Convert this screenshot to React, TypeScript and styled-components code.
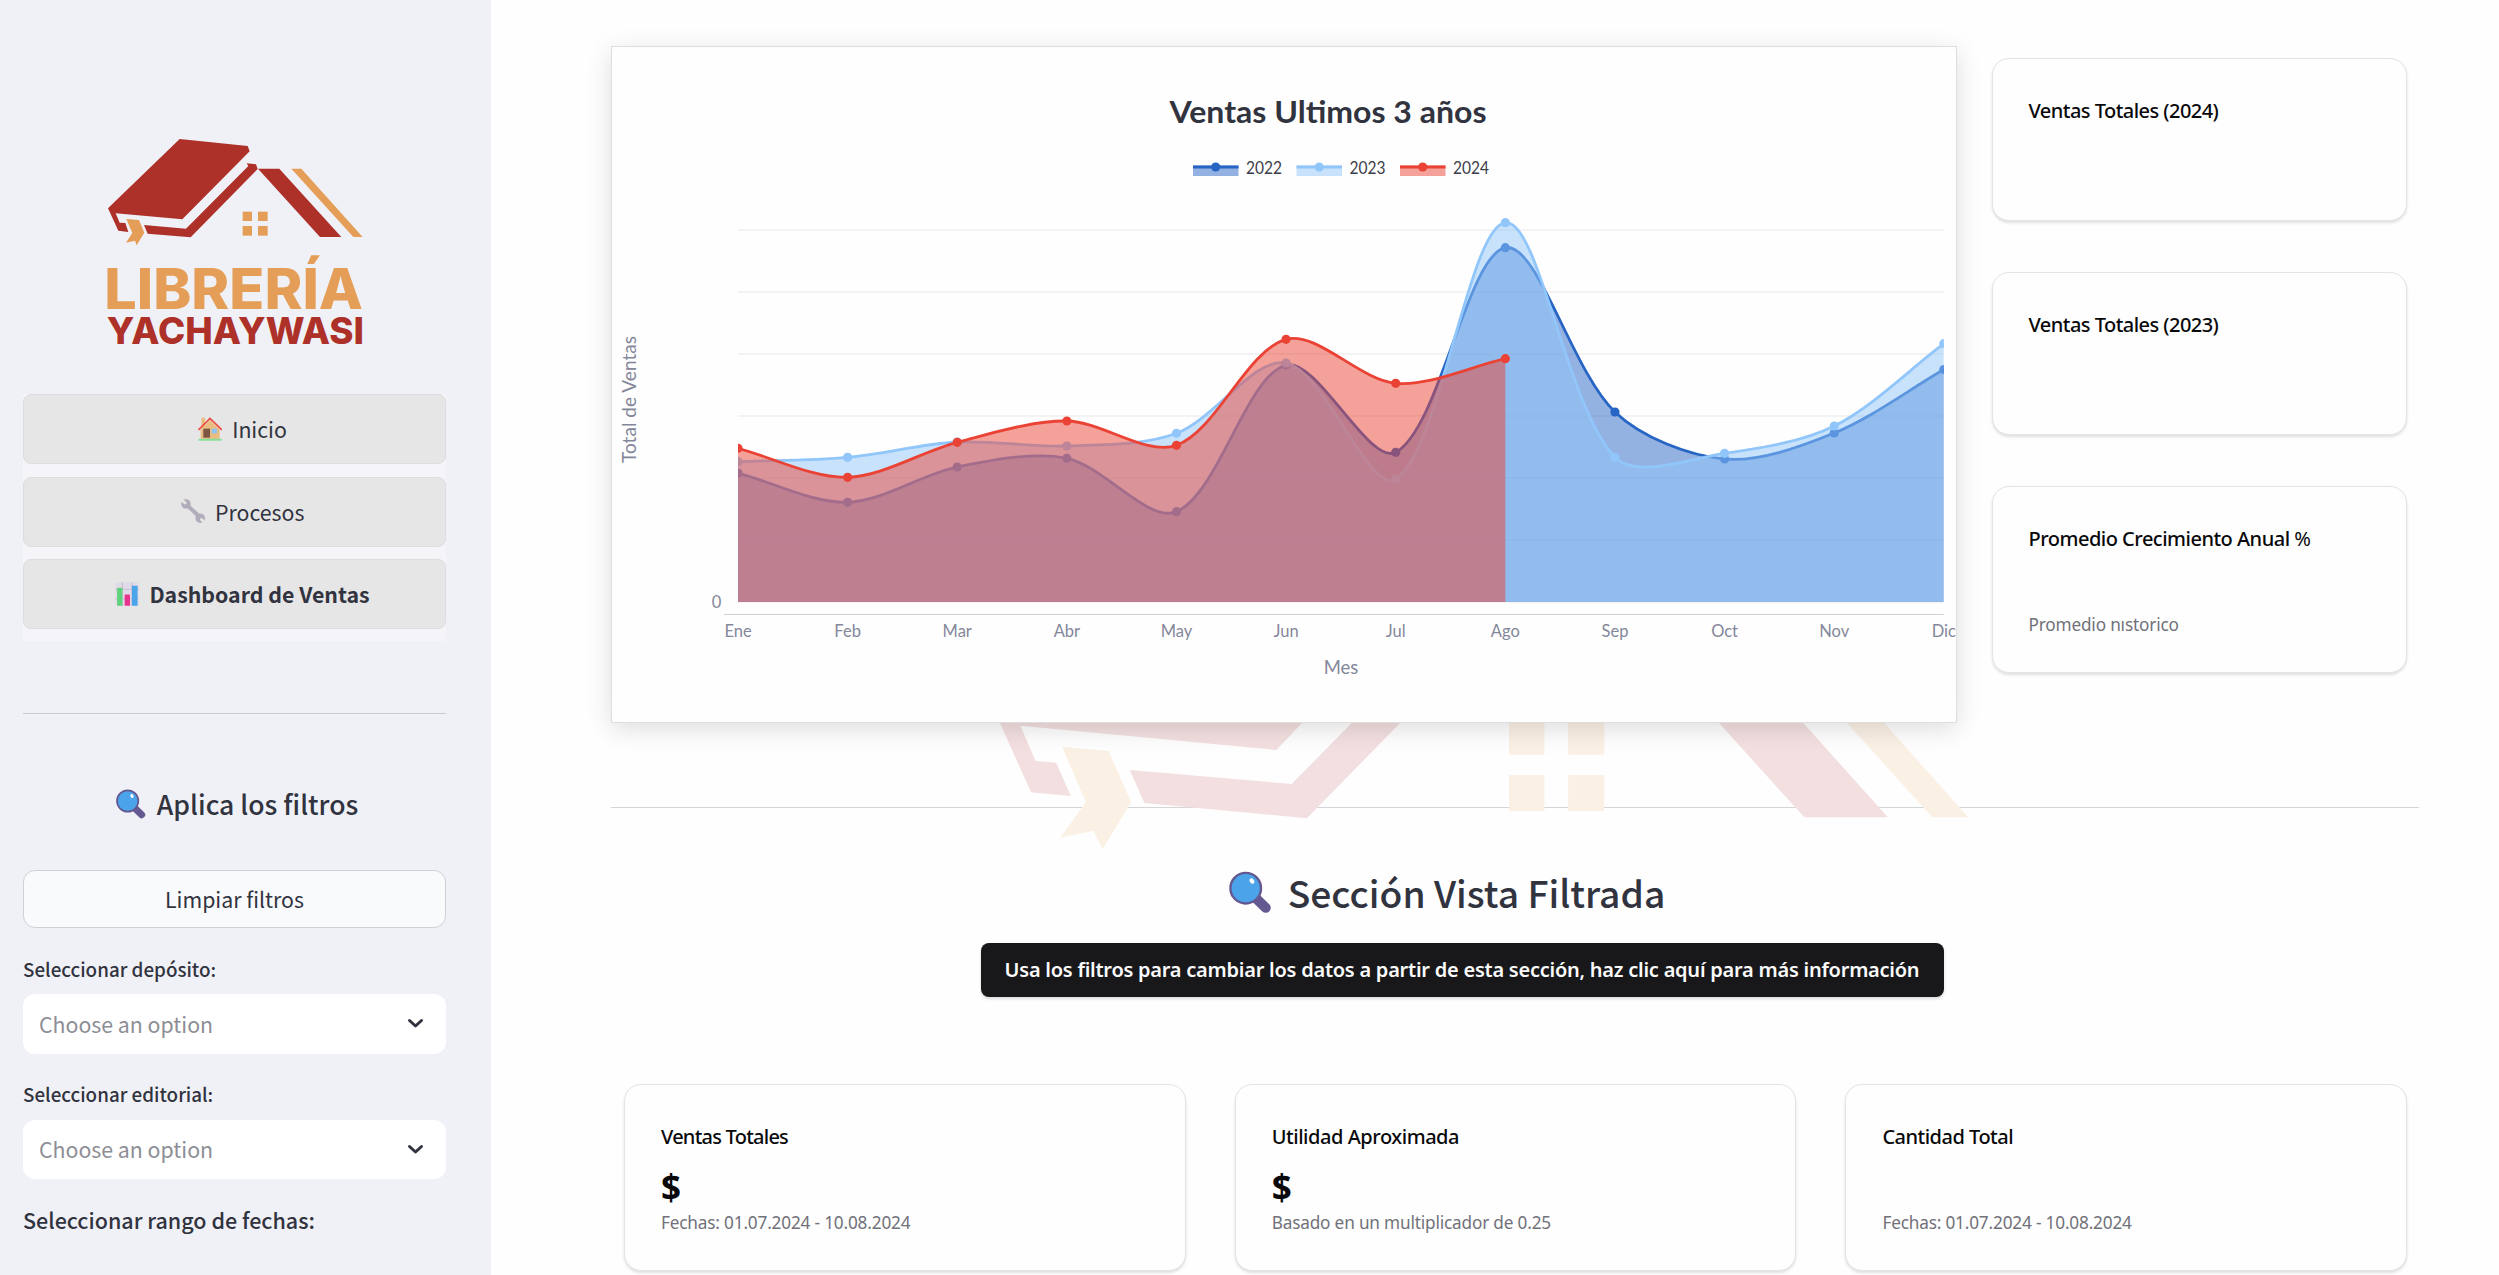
import React from "react";
import styled, { createGlobalStyle } from "styled-components";

const SOURCE = '"Noto Sans CJK SC", "Noto Sans", sans-serif';
const SEGOE = '"Noto Sans", "Open Sans", sans-serif';
const INK = "#31333f";

const GlobalStyle = createGlobalStyle`
  * { box-sizing: border-box; }
  body { margin: 0; background: #fefefe; color: ${INK}; font-family: ${SOURCE}; }
  svg { display: block; flex: none; }
`;

/* ---------- page shell ---------- */

const Page = styled.div`
  display: flex;
  width: 2499px;
  height: 1275px;
  overflow: hidden;
`;

const Sidebar = styled.aside`
  width: 491px;
  flex: none;
  padding: 139px 45px 0 23px;
  background: #f0f1f6;
  display: flex;
  flex-direction: column;

  > * {
    flex: none;
  }
`;

const Main = styled.main`
  position: relative;
  flex: 1;
  padding: 46px 80px 0 120px;
`;

const Watermark = styled.svg`
  position: absolute;
  left: 489px;
  top: 700px;
`;

const Rule = styled.hr<{ $top: number }>`
  width: 100%;
  height: 1px;
  margin: ${(p) => p.$top}px 0 0;
  border: 0;
  background: rgba(49, 51, 63, 0.2);
`;

/* ---------- sidebar ---------- */

const LogoBox = styled.div`
  display: flex;
  padding-left: 84px;
  margin-bottom: 49px;

  svg {
    overflow: visible;
  }
`;

const Nav = styled.nav`
  display: flex;
  flex-direction: column;
  gap: 12.5px;
  padding-bottom: 12px;
  background: #f4f4f9;
`;

const NavItem = styled.a<{ $active?: boolean }>`
  height: 70px;
  display: flex;
  align-items: center;
  justify-content: center;
  gap: 10px;
  padding-left: 16px;
  border: 1px solid #dcdddd;
  border-radius: 8px;
  background: #e6e6e6;
  font-size: 21.3px;
  font-weight: ${(p) => (p.$active ? 700 : 400)};
  line-height: 30px;
`;

const FilterTitle = styled.h3`
  display: flex;
  align-items: center;
  justify-content: center;
  gap: 11px;
  margin: 70px 0 46px;
  padding-left: 5px;
  font-size: 26.6px;
  font-weight: 500;
  line-height: 40px;
`;

const ClearButton = styled.button`
  height: 58px;
  border: 1px solid #cfd0d5;
  border-radius: 12px;
  background: #f9fafc;
  color: ${INK};
  font: 400 21.3px/30px ${SOURCE};
`;

const FieldLabel = styled.label<{ $large?: boolean }>`
  margin-top: ${(p) => (p.$large ? 26.2 : 26.8)}px;
  font-size: ${(p) => (p.$large ? 21.5 : 18.8)}px;
  font-weight: 500;
  line-height: ${(p) => (p.$large ? 30 : 28)}px;
`;

const Select = styled.div`
  height: 59.5px;
  margin-top: 11.3px;
  padding: 0 22px 0 16px;
  display: flex;
  align-items: center;
  justify-content: space-between;
  border-radius: 12px;
  background: #fff;
  color: #8d8e95;
  font-size: 21.3px;
  line-height: 30px;
`;

/* ---------- top area ---------- */

const TopRow = styled.section`
  display: flex;
  align-items: flex-start;
  gap: 34.5px;
`;

const ChartCard = styled.div`
  position: relative;
  width: 1346px;
  height: 676.5px;
  border: 1px solid #dedede;
  background: #fefefe;
  box-shadow: 0 6px 24px rgba(0, 0, 0, 0.13);
  overflow: hidden;
`;

const YearColumn = styled.div`
  display: flex;
  flex-direction: column;
  gap: 51px;
  width: 415.5px;
  padding-top: 12.3px;
`;

const Card = styled.article`
  border: 1px solid #e4e4e7;
  border-radius: 17px;
  background: #fefefe;
  padding: 38px 36px 36.5px;
  box-shadow: 0 2px 3px rgba(0, 0, 0, 0.12);
  font-family: ${SEGOE};
  white-space: nowrap;
`;

const CardTitle = styled.h4<{ $track: number }>`
  margin: 0;
  color: #09090b;
  font-size: 20px;
  font-weight: 500;
  line-height: 28px;
  letter-spacing: ${(p) => p.$track}px;
`;

const Thin = styled.span`
  font-weight: 400;
`;

const CardValue = styled.div`
  height: 44px;
  margin-top: 14.5px;
  color: #09090b;
  font-size: 35px;
  font-weight: 700;
  line-height: 44px;
`;

const CardNote = styled.p`
  margin: 1.5px 0 -1.5px;
  height: 24px;
  color: #71717a;
  font-size: 17.2px;
  line-height: 24px;
  letter-spacing: -0.17px;
`;

/* The blank patch above the note trims the tops of these letters. */
const Trimmed = styled.span`
  position: relative;

  &::before {
    content: "";
    position: absolute;
    left: 0;
    right: -1px;
    top: 0;
    height: 7.5px;
    background: #fefefe;
  }
`;

/* ---------- filtered section ---------- */

const FilteredHead = styled.section`
  width: 1702px;
  display: flex;
  flex-direction: column;
  align-items: center;
`;

const SectionTitle = styled.h2`
  display: flex;
  align-items: center;
  gap: 16px;
  margin: 59px 30px 26px 0;
  font-size: 37.2px;
  font-weight: 500;
  line-height: 50px;
`;

const InfoButton = styled.button`
  width: 963px;
  height: 54px;
  padding: 0;
  border: 0;
  border-radius: 8px;
  background: #18181b;
  color: #fafafa;
  box-shadow: 0 2px 3px rgba(0, 0, 0, 0.14);
  font: 600 20px/28px ${SEGOE};
  letter-spacing: -0.24px;
  white-space: nowrap;
`;

const CardRow = styled.section`
  display: grid;
  grid-template-columns: repeat(3, 561.7px);
  column-gap: 49px;
  padding-left: 13px;
  margin-top: 86.6px;
`;

/* ---------- drawings ---------- */

const RED = "#ad3029";
const ORANGE = "#e59e58";

const Logo = () => (
  <svg width="256" height="206" viewBox="321 117 768 618">
    <g fill={RED}>
      <polygon points="539,117 743,138 749,154 547,358 347,340 359,368 376,369 385,396 355,392 324,325" />
      <polygon points="740,190 768,193 773,207 572,412 443,401 432,375 558,386 745,198" />
      <polygon points="774,206 838,206 1024,411 960,411" />
    </g>
    <g fill={ORANGE}>
      <polygon points="874,206 904,206 1088,411 1060,411" />
      <polygon points="379,357 417,360 433,398 410,436 405,422 378,428 397,399" />
      <rect x="728" y="335" width="28" height="28" />
      <rect x="774" y="335" width="29" height="28" />
      <rect x="728" y="378" width="28" height="29" />
      <rect x="774" y="378" width="29" height="29" />
    </g>
    <text x="313" y="628" fill={ORANGE} fontFamily="Inter, sans-serif" fontWeight="800" fontSize="168" textLength="776" lengthAdjust="spacingAndGlyphs">
      LIBRERÍA
    </text>
    <text x="320" y="732" fill={RED} fontFamily="Inter, sans-serif" fontWeight="800" fontSize="111" textLength="772" lengthAdjust="spacingAndGlyphs">
      YACHAYWASI
    </text>
  </svg>
);

const HouseIcon = () => (
  <svg width="24" height="24" viewBox="595 112 72 72">
    <rect x="605" y="114" width="11" height="30" fill="#e9bd82" />
    <polygon points="603,150 631,121 660,150 660,178 603,178" fill="#e9bd82" />
    <rect x="596" y="177" width="71" height="6" rx="3" fill="#86e29b" />
    <rect x="611" y="147" width="20" height="27" fill="#7d5643" />
    <rect x="636" y="147" width="16" height="14" fill="#90c4f4" />
    <polyline points="598,149 631,116 665,149" fill="none" stroke="#ec4b40" strokeWidth="5" strokeLinecap="round" />
  </svg>
);

const WrenchIcon = () => (
  <svg width="24.5" height="24.5" viewBox="542 361 74 74">
    <g fill="#b3adbb" stroke="#b3adbb">
      <line x1="562" y1="381" x2="597" y2="414" strokeWidth="12" />
      <circle cx="557" cy="376" r="14.5" stroke="none" />
      <circle cx="600" cy="419" r="14.5" stroke="none" />
    </g>
    <g stroke="#e6e6e6" strokeWidth="9" strokeLinecap="round">
      <line x1="541" y1="362" x2="554" y2="373" />
      <line x1="604" y1="423" x2="617" y2="436" />
    </g>
  </svg>
);

const BarsIcon = () => (
  <svg width="24" height="24.5" viewBox="345 607 72 74">
    <rect x="346" y="608" width="70" height="72" rx="8" fill="#e1dbe9" />
    <path d="M367 608V680M396 608V680M346 629H416M346 658H416" stroke="#c4bbcd" strokeWidth="3" />
    <rect x="351" y="624" width="16" height="55" rx="2" fill="#5fd37c" />
    <rect x="374" y="645" width="16" height="34" rx="2" fill="#e8338d" />
    <rect x="396" y="618" width="17" height="61" rx="2" fill="#4aa4ea" />
  </svg>
);

const LensIcon = ({ size }: { size: number }) => (
  <svg width={size} height={size} viewBox="347 145 90 90">
    <line x1="403" y1="202" x2="424" y2="222" stroke="#63588f" strokeWidth="21" strokeLinecap="round" />
    <circle cx="382" cy="181" r="32" fill="#4ba3ea" stroke="#63588f" strokeWidth="5" />
    <ellipse cx="395" cy="166" rx="4.5" ry="6" fill="#fff" transform="rotate(-30 395 166)" />
  </svg>
);

const Chevron = () => (
  <svg width="17" height="11" viewBox="0 0 17 11" fill="none" stroke={INK} strokeWidth="3" strokeLinecap="round" strokeLinejoin="round">
    <path d="M2.500 2.500 8.500 8 14.500 2.500" />
  </svg>
);

const HouseWatermark = () => (
  <Watermark width="1000" height="170" viewBox="980 700 1000 170">
    <g fill="#f3dfe0">
      <polygon points="989.600,700 1323.800,700 1276.400,750 1020.400,725.700 1035.600,761 1056.200,762.700 1070.800,796 1031,792.300" />
      <polygon points="1129.800,770 1291.600,784 1374.400,700 1422.600,700 1306.900,818.300 1144.400,803" />
      <polygon points="1698.300,700 1782.600,700 1887.900,817.300 1804.300,817.300" />
    </g>
    <g fill="#fbf0e4">
      <polygon points="1826.300,700 1863.700,700 1968.200,817.300 1932.300,817.300" />
      <polygon points="1062.100,747 1108.600,751 1131.100,802.300 1102.600,849 1093.300,830.700 1060.200,837.700 1086,802.300" />
      <rect x="1509" y="700" width="35.500" height="54.700" />
      <rect x="1568.200" y="700" width="36" height="54.700" />
      <rect x="1509" y="775" width="35.500" height="36" />
      <rect x="1568.200" y="775" width="36" height="36" />
    </g>
  </Watermark>
);

/* ---------- chart ---------- */

type Pt = { x: number; y: number };

const MONTHS = ["Ene", "Feb", "Mar", "Abr", "May", "Jun", "Jul", "Ago", "Sep", "Oct", "Nov", "Dic"];
const LEFT = 738;
const STEP = 109.62;
const RIGHT = LEFT + STEP * 11;
const BASE = 602;
const TENSION = 0.32;

const SERIES = [
  { name: "2022", color: "#2765c4", legendX: 1193, values: [473, 502.3, 467, 458.3, 511.7, 365, 452.3, 247.7, 412, 459, 433, 369.5] },
  { name: "2023", color: "#91c6fa", legendX: 1296.5, values: [461.7, 457.3, 442, 446, 433.3, 363, 479, 222.7, 457.3, 453.3, 426, 343.7] },
  { name: "2024", color: "#ea4335", legendX: 1400, values: [448.3, 477.3, 442.3, 421, 445.3, 339.3, 383.3, 358.7] },
];

function smooth(pts: Pt[]) {
  const dist = (a: Pt, b: Pt) => Math.hypot(a.x - b.x, a.y - b.y);
  const ctrl = pts.map((p, i) => {
    const a = pts[Math.max(i - 1, 0)];
    const b = pts[Math.min(i + 1, pts.length - 1)];
    const d0 = dist(a, p);
    const d1 = dist(p, b);
    const f0 = (TENSION * d0) / (d0 + d1);
    const f1 = (TENSION * d1) / (d0 + d1);
    return {
      in: { x: p.x - f0 * (b.x - a.x), y: p.y - f0 * (b.y - a.y) },
      out: { x: p.x + f1 * (b.x - a.x), y: p.y + f1 * (b.y - a.y) },
    };
  });
  return pts.reduce((d, p, i) => {
    if (i === 0) return `M${p.x} ${p.y}`;
    const c1 = ctrl[i - 1].out;
    const c2 = ctrl[i].in;
    return `${d} C${c1.x} ${c1.y} ${c2.x} ${c2.y} ${p.x} ${p.y}`;
  }, "");
}

const SalesChart = () => (
  <svg width="1344" height="674.5" viewBox="612 47 1344 674.500" fontFamily="Lato, sans-serif">
    <defs>
      <clipPath id="plot">
        <rect x={LEFT} y="180" width={RIGHT - LEFT} height={BASE - 180} />
      </clipPath>
    </defs>
    <text x="1169.500" y="122.700" fill={INK} fontSize="29.500" fontWeight="700" textLength="317" lengthAdjust="spacingAndGlyphs">
      Ventas Ultimos 3 años
    </text>
    {SERIES.map((s) => (
      <g key={s.name}>
        <rect x={s.legendX} y="165.500" width="45.500" height="10.500" fill={s.color} fillOpacity="0.5" />
        <line x1={s.legendX} x2={s.legendX + 45.5} y1="167" y2="167" stroke={s.color} strokeWidth="2.800" />
        <circle cx={s.legendX + 22.7} cy="167" r="4.600" fill={s.color} />
        <text x={s.legendX + 53} y="174" fill="#3b3d48" fontSize="16.500" textLength="36" lengthAdjust="spacingAndGlyphs">
          {s.name}
        </text>
      </g>
    ))}
    {[230, 292, 354, 416, 478, 540, 602].map((y) => (
      <line key={y} x1={LEFT} x2={RIGHT} y1={y} y2={y} stroke="#f3f3f3" strokeWidth="2" />
    ))}
    <g clipPath="url(#plot)">
      {SERIES.map((s) => {
        const pts = s.values.map((y, i) => ({ x: LEFT + i * STEP, y }));
        const d = smooth(pts);
        return (
          <g key={s.name}>
            <path d={`${d} V${BASE} H${LEFT} Z`} fill={s.color} fillOpacity="0.5" />
            <path d={d} fill="none" stroke={s.color} strokeWidth="2.800" />
            {pts.map((p) => (
              <circle key={p.x} cx={p.x} cy={p.y} r="4.600" fill={s.color} />
            ))}
          </g>
        );
      })}
    </g>
    <line x1="724" x2={RIGHT} y1="614.500" y2="614.500" stroke="#d0d1d3" strokeWidth="1" />
    <g fill="#84879a" fontSize="16.500" textAnchor="middle">
      <text x="716.500" y="608">0</text>
      {MONTHS.map((m, i) => (
        <text key={m} x={LEFT + i * STEP} y="637">
          {m}
        </text>
      ))}
      <text x="1341" y="673.700" fontSize="18.500">
        Mes
      </text>
      <text transform="translate(636 399.500) rotate(-90)" fontSize="19" textLength="127">
        Total de Ventas
      </text>
    </g>
  </svg>
);

/* ---------- app ---------- */

export default function App() {
  return (
    <Page>
      <GlobalStyle />
      <Sidebar>
        <LogoBox>
          <Logo />
        </LogoBox>
        <Nav>
          <NavItem>
            <HouseIcon />
            Inicio
          </NavItem>
          <NavItem>
            <WrenchIcon />
            Procesos
          </NavItem>
          <NavItem $active>
            <BarsIcon />
            Dashboard de Ventas
          </NavItem>
        </Nav>
        <Rule $top={72} />
        <FilterTitle>
          <LensIcon size={30} />
          Aplica los filtros
        </FilterTitle>
        <ClearButton>Limpiar filtros</ClearButton>
        <FieldLabel>Seleccionar depósito:</FieldLabel>
        <Select>
          Choose an option
          <Chevron />
        </Select>
        <FieldLabel>Seleccionar editorial:</FieldLabel>
        <Select>
          Choose an option
          <Chevron />
        </Select>
        <FieldLabel $large>Seleccionar rango de fechas:</FieldLabel>
      </Sidebar>

      <Main>
        <HouseWatermark />
        <TopRow>
          <ChartCard>
            <SalesChart />
          </ChartCard>
          <YearColumn>
            <Card>
              <CardTitle $track={-0.54}>Ventas Totales (2024)</CardTitle>
              <CardValue />
            </Card>
            <Card>
              <CardTitle $track={-0.54}>Ventas Totales (2023)</CardTitle>
              <CardValue />
            </Card>
            <Card>
              <CardTitle $track={-0.5}>
                Promedio Crecimiento Anual <Thin>%</Thin>
              </CardTitle>
              <CardValue />
              <CardNote>
                Promedio <Trimmed>hi</Trimmed>storico
              </CardNote>
            </Card>
          </YearColumn>
        </TopRow>

        <Rule $top={84.5} />

        <FilteredHead>
          <SectionTitle>
            <LensIcon size={43} />
            Sección Vista Filtrada
          </SectionTitle>
          <InfoButton>
            Usa los filtros para cambiar los datos a partir de esta sección, haz clic aquí para más información
          </InfoButton>
        </FilteredHead>

        <CardRow>
          <Card>
            <CardTitle $track={-0.76}>Ventas Totales</CardTitle>
            <CardValue>$</CardValue>
            <CardNote>Fechas: 01.07.2024 - 10.08.2024</CardNote>
          </Card>
          <Card>
            <CardTitle $track={-0.45}>Utilidad Aproximada</CardTitle>
            <CardValue>$</CardValue>
            <CardNote>Basado en un multiplicador de 0.25</CardNote>
          </Card>
          <Card>
            <CardTitle $track={-0.5}>Cantidad Total</CardTitle>
            <CardValue />
            <CardNote>Fechas: 01.07.2024 - 10.08.2024</CardNote>
          </Card>
        </CardRow>
      </Main>
    </Page>
  );
}
